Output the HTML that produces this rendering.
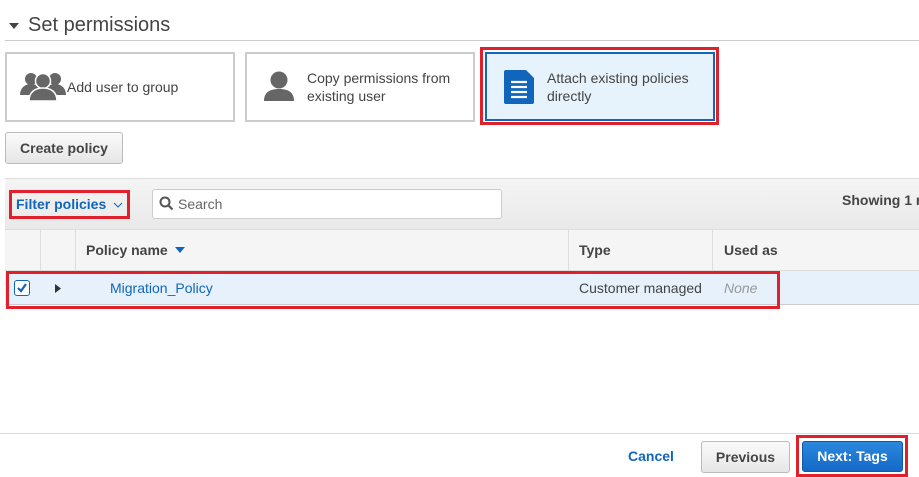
<!DOCTYPE html>
<html><head><style>
body{margin:0;width:919px;height:477px;background:#fff;font-family:"Liberation Sans",Arial,sans-serif;position:relative;overflow:hidden}
.a{position:absolute;white-space:nowrap}
.card{position:absolute;border:2px solid #ccc;background:#fff;box-sizing:border-box;font-size:14px;color:#444;line-height:18px}
.btn{position:absolute;box-sizing:border-box;border:1px solid #bbb;border-radius:3px;background:linear-gradient(#fafafa,#e6e6e6);font-weight:bold;font-size:14px;color:#444;text-align:center}
.red{position:absolute;border:3px solid #e0202a;box-sizing:border-box}
.vl{position:absolute;width:1px;background:#ddd}
</style></head><body>
<svg class="a" style="left:9px;top:23px" width="10" height="6"><path d="M0 0H10L5 6Z" fill="#444"/></svg>
<div class="a" style="left:28px;top:14px;font-size:20px;color:#444">Set permissions</div>
<div class="a" style="left:5px;top:40px;width:914px;height:1px;background:#ccc"></div>

<div class="card" style="left:5px;top:52px;width:230px;height:70px">
<svg class="a" style="left:13px;top:17px" width="46" height="30" viewBox="0 0 46 30"><g fill="#666"><circle cx="11" cy="8" r="6"/><circle cx="35" cy="8" r="6"/><path d="M0 24c0-7 5-11 11-11s9 3 9 11z"/><path d="M26 24c0-8 3-11 9-11s11 4 11 11z"/><circle cx="23" cy="10" r="7.5" stroke="#fff" stroke-width="1.5"/><path d="M9 30c0-9 6-13 14-13s14 4 14 13z" stroke="#fff" stroke-width="1.5"/></g></svg>
<div class="a" style="left:60px;top:24px">Add user to group</div></div>

<div class="card" style="left:245px;top:52px;width:230px;height:70px">
<svg class="a" style="left:16px;top:17px" width="32" height="30" viewBox="0 0 32 30"><g fill="#666"><circle cx="16" cy="9" r="8.5"/><path d="M1 30c0-9 6-12 15-12s15 3 15 12z"/></g></svg>
<div class="a" style="left:60px;top:15px">Copy permissions from<br>existing user</div></div>

<div class="red" style="left:480px;top:47px;width:239px;height:78px"></div>
<div class="card" style="left:485px;top:52px;width:230px;height:69px;border-color:#1166bb;background:#e6f2fc">
<svg class="a" style="left:17px;top:16px" width="31" height="34" viewBox="0 0 31 34"><path d="M2 0H22L30 8V32a2 2 0 0 1-2 2H2a2 2 0 0 1-2-2V2a2 2 0 0 1 2-2z" fill="#1166bb"/><g stroke="#fff" stroke-width="2.2"><path d="M7 12H23M7 17H23M7 22H23M7 27H23"/></g></svg>
<div class="a" style="left:60px;top:15px">Attach existing policies<br>directly</div></div>

<div class="btn" style="left:5px;top:132px;width:118px;height:32px;line-height:30px">Create policy</div>

<div class="a" style="left:5px;top:178px;width:914px;height:51px;background:linear-gradient(#f4f4f4,#e9e9e9);border-top:1px solid #ddd;box-sizing:border-box"></div>
<div class="red" style="left:9px;top:190px;width:121px;height:29px"></div>
<div class="a" style="left:16px;top:196px;font-size:14px;font-weight:bold;color:#1166bb">Filter policies</div>
<svg class="a" style="left:113px;top:202px" width="10" height="6"><path d="M1 1L5 5L9 1" stroke="#1166bb" fill="none"/></svg>
<div class="a" style="left:152px;top:189px;width:350px;height:30px;background:#fff;border:1px solid #ccc;border-radius:3px;box-sizing:border-box"></div>
<svg class="a" style="left:159px;top:196px" width="15" height="15"><circle cx="6" cy="6" r="4.5" stroke="#555" stroke-width="2" fill="none"/><path d="M9 9L13.5 13.5" stroke="#555" stroke-width="2.2"/></svg>
<div class="a" style="left:178px;top:196px;font-size:14px;color:#666">Search</div>
<div class="a" style="left:842px;top:192px;font-size:14px;font-weight:bold;color:#444">Showing 1 r</div>

<div class="a" style="left:5px;top:229px;width:914px;height:42px;background:#f5f5f5;border-top:1px solid #ddd;border-bottom:1px solid #ddd;box-sizing:border-box"></div>
<div class="vl" style="left:40px;top:229px;height:42px"></div>
<div class="vl" style="left:75px;top:229px;height:42px"></div>
<div class="vl" style="left:568px;top:229px;height:42px"></div>
<div class="vl" style="left:712px;top:229px;height:42px"></div>
<div class="a" style="left:86px;top:242px;font-size:14px;font-weight:bold;color:#444">Policy name</div>
<svg class="a" style="left:175px;top:247px" width="10" height="6"><path d="M0 0H10L5 6Z" fill="#1166bb"/></svg>
<div class="a" style="left:579px;top:242px;font-size:14px;font-weight:bold;color:#444">Type</div>
<div class="a" style="left:724px;top:242px;font-size:14px;font-weight:bold;color:#444">Used as</div>

<div class="a" style="left:5px;top:271px;width:914px;height:34px;background:#e6f1fb;border-bottom:1px solid #ccc;box-sizing:border-box"></div>
<div class="red" style="left:6px;top:271px;width:774px;height:38px"></div>
<div class="a" style="left:14px;top:280px;width:16px;height:16px;border:1px solid #1166bb;border-radius:3px;background:#fff;box-sizing:border-box"></div>
<svg class="a" style="left:15px;top:281px" width="14" height="14"><path d="M3 7L6 10L11 3" stroke="#1166bb" stroke-width="2.2" fill="none"/></svg>
<svg class="a" style="left:55px;top:284px" width="6" height="9"><path d="M0 0L6 4.5L0 9Z" fill="#333"/></svg>
<div class="a" style="left:110px;top:280px;font-size:14px;color:#1166bb">Migration_Policy</div>
<div class="a" style="left:579px;top:280px;font-size:14px;color:#444">Customer managed</div>
<div class="a" style="left:724px;top:280px;font-size:14px;color:#999;font-style:italic">None</div>

<div class="a" style="left:0;top:433px;width:919px;height:1px;background:#ddd"></div>
<div class="a" style="left:628px;top:448px;font-size:14px;font-weight:bold;color:#1166bb">Cancel</div>
<div class="btn" style="left:701px;top:441px;width:89px;height:32px;line-height:30px">Previous</div>
<div class="red" style="left:796px;top:435px;width:112px;height:42px"></div>
<div class="btn" style="left:802px;top:441px;width:101px;height:31px;line-height:29px;background:linear-gradient(#2b88dd,#1569c7);border-color:#1158a8;color:#fff">Next: Tags</div>
</body></html>
